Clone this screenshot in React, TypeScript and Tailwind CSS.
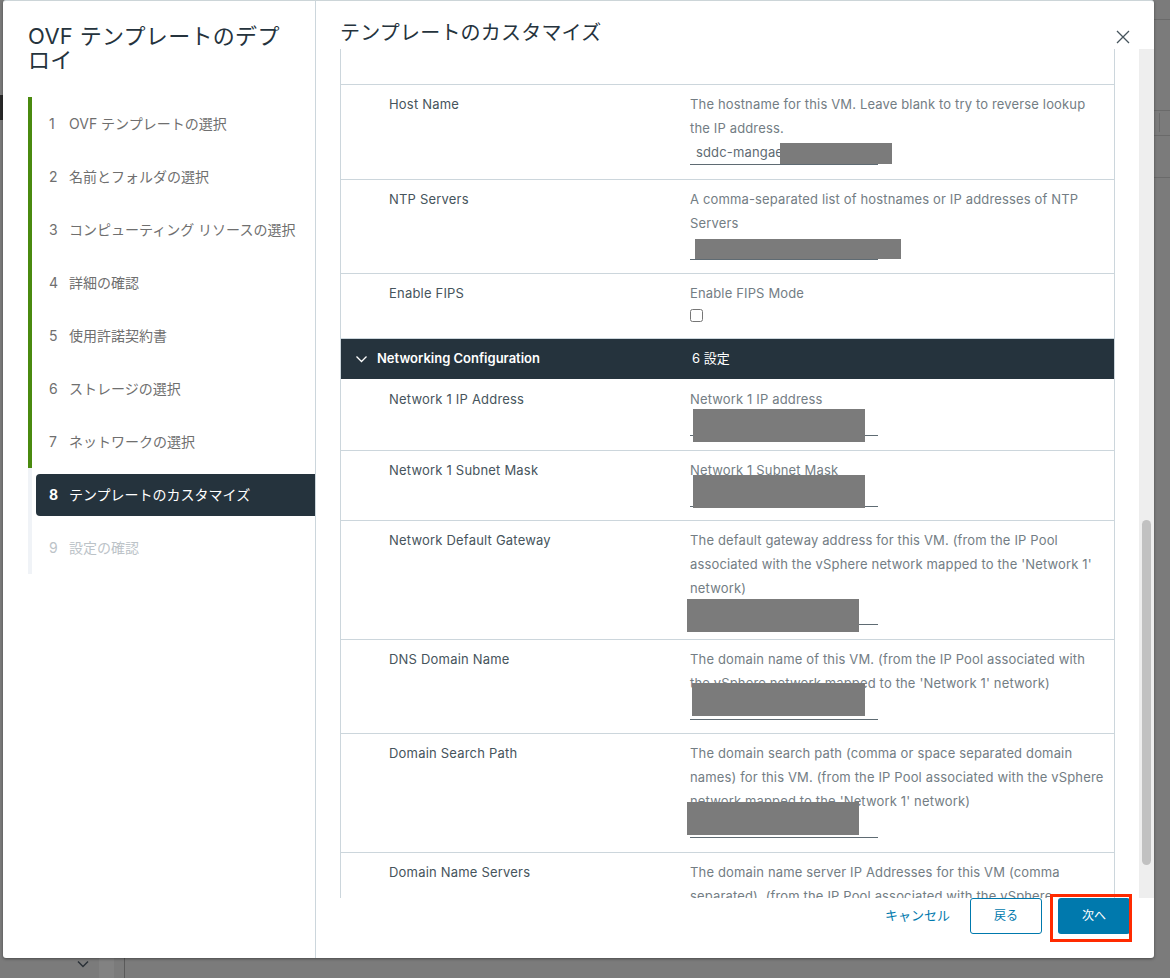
import React from "react";

const steps = [
  "OVF テンプレートの選択",
  "名前とフォルダの選択",
  "コンピューティング リソースの選択",
  "詳細の確認",
  "使用許諾契約書",
  "ストレージの選択",
  "ネットワークの選択",
  "テンプレートのカスタマイズ",
  "設定の確認",
];

type Row = { label: string; lines: string[]; value?: string; mask?: string; tight?: boolean };

const rowsA: Row[] = [
  {
    label: "Host Name",
    lines: ["The hostname for this VM. Leave blank to try to reverse lookup", "the IP address."],
    value: "sddc-mangae",
    mask: "left-[439px] top-[58px] w-[112px] h-[21px]",
  },
  {
    label: "NTP Servers",
    lines: ["A comma-separated list of hostnames or IP addresses of NTP", "Servers"],
    value: "",
    mask: "left-[354px] top-[59px] w-[206px] h-[20px]",
    tight: true,
  },
];

const rowsB: Row[] = [
  {
    label: "Network 1 IP Address",
    lines: ["Network 1 IP address"],
    value: "",
    mask: "left-[352px] top-[29px] w-[172px] h-[33px]",
  },
  {
    label: "Network 1 Subnet Mask",
    lines: ["Network 1 Subnet Mask"],
    value: "",
    mask: "left-[352px] top-[24px] w-[172px] h-[33px]",
    tight: true,
  },
  {
    label: "Network Default Gateway",
    lines: [
      "The default gateway address for this VM. (from the IP Pool",
      "associated with the vSphere network mapped to the 'Network 1'",
      "network)",
    ],
    value: "",
    mask: "left-[346px] top-[78px] w-[172px] h-[33px]",
  },
  {
    label: "DNS Domain Name",
    lines: [
      "The domain name of this VM. (from the IP Pool associated with",
      "the vSphere network mapped to the 'Network 1' network)",
    ],
    value: "",
    mask: "left-[351px] top-[43px] w-[173px] h-[33px]",
    tight: true,
  },
  {
    label: "Domain Search Path",
    lines: [
      "The domain search path (comma or space separated domain",
      "names) for this VM. (from the IP Pool associated with the vSphere",
      "network mapped to the 'Network 1' network)",
    ],
    value: "",
    mask: "left-[346px] top-[68px] w-[172px] h-[33px]",
  },
];

function ConfigRow({ row }: { row: Row }) {
  return (
    <div className={`relative flex border-b border-[#ccd6dc] pt-[7px] ${row.tight ? "pb-[13px]" : "pb-[14px]"}`}>
      <div className="w-[349px] shrink-0 pl-[48px] text-[13px] leading-[24px] tracking-[0.2px] text-[#46545c]">
        {row.label}
      </div>
      <div className="text-[13px] leading-[24px] tracking-[0.15px] text-[#737d84] whitespace-nowrap">
        {row.lines.map((l) => (
          <div key={l}>{l}</div>
        ))}
        <input
          readOnly
          value={row.value ?? ""}
          className="block w-[188px] h-[25px] border-b border-[#5f6b73] pl-[6px] pr-0 text-[13px] tracking-[0.15px] text-[#5f6b73] outline-none"
        />
      </div>
      {row.mask && <div className={`absolute bg-[#7b7b7b] ${row.mask}`} />}
    </div>
  );
}

export default function App() {
  return (
    <div
      className="relative w-[1170px] h-[978px] overflow-hidden bg-[#7b7b7b]"
      style={{ fontFamily: 'Inter, "Noto Sans CJK JP", sans-serif' }}
    >
      {/* dimmed page behind the dialog */}
      <div className="absolute left-0 top-[95px] w-[3px] h-[25px] bg-[#2a2a2a]" />
      <div className="absolute left-[1154px] top-[19px] w-[16px] h-px bg-[#6a6a6a]" />
      <div className="absolute left-[1154px] top-[110px] w-[16px] h-px bg-[#6a6a6a]" />
      <div className="absolute left-[1154px] top-[135px] w-[16px] h-px bg-[#6a6a6a]" />
      <div className="absolute left-[1154px] top-[177px] w-[16px] h-px bg-[#6a6a6a]" />
      <div className="absolute left-[1159px] top-[113px] w-px h-[19px] bg-[#6a6a6a]" />
      <div className="absolute left-[99px] top-[958px] w-[15px] h-[20px] bg-[#828282]" />
      <div className="absolute left-[124px] top-[958px] w-px h-[20px] bg-[#5a5a5a]" />
      <svg className="absolute left-[77px] top-[960px]" width="12" height="8" viewBox="0 0 12 8" fill="none">
        <path d="M1 1.5 6 6.5 11 1.5" stroke="#2b3238" strokeWidth="1.5" />
      </svg>

      {/* dialog */}
      <div className="relative ml-[3px] flex w-[1151px] h-[958px] rounded-[3px] bg-white border-t border-[#ccd5d8] shadow-[0_1px_3px_rgba(0,0,0,0.4)]">
        {/* sidebar */}
        <aside className="w-[313px] shrink-0 border-r border-[#ccd6dc] pl-[25px]">
          <h1 className="pt-[23px] h-[96px] w-[270px] text-[22px] leading-[24px] tracking-[0.3px] font-normal text-[#25333d]">
            OVF テンプレートのデプ
            <br />
            ロイ
          </h1>
          <ol>
            {steps.map((s, i) => {
              const active = i === 7;
              const done = i < 7;
              return (
                <li
                  key={s}
                  className={`flex h-[53px] items-center border-l-4 pl-[4px] text-[14px] ${
                    done ? "border-[#4a8a0f]" : "border-[#f0f3f7]"
                  }`}
                >
                  <div
                    className={`flex h-[42px] flex-1 items-center pl-[13px] whitespace-nowrap ${
                      active
                        ? "rounded-l-[4px] bg-[#25333d] text-white"
                        : i === 8
                          ? "text-[#bcc3c8]"
                          : "text-[#6f6f6f]"
                    }`}
                  >
                    <span className={`w-[20px] ${active ? "font-bold" : ""}`}>{i + 1}</span>
                    <span>{s}</span>
                  </div>
                </li>
              );
            })}
          </ol>
        </aside>

        {/* main */}
        <main className="flex min-w-0 flex-1 flex-col">
          <header className="flex h-[48px] shrink-0 items-start justify-between pl-[24px] pr-[24px]">
            <h2 className="pt-[18px] text-[20px] leading-[28px] tracking-[0.2px] font-normal text-[#25333d]">
              テンプレートのカスタマイズ
            </h2>
            <button className="mt-[29px] mr-0 text-[#46545c]" aria-label="close">
              <svg width="14" height="14" viewBox="0 0 14 14" fill="none">
                <path d="M1 1 13 13M13 1 1 13" stroke="currentColor" strokeWidth="1.3" />
              </svg>
            </button>
          </header>

          <div className="flex h-[849px] shrink-0 overflow-hidden">
            <div className="ml-[24px] w-[775px] shrink-0 self-start border-x border-[#ccd6dc]">
              <div className="h-[36px] border-b border-[#ccd6dc]" />
              {rowsA.map((r) => (
                <ConfigRow key={r.label} row={r} />
              ))}
              <div className="flex h-[65px] border-b border-[#ccd6dc] pt-[7px]">
                <div className="w-[349px] shrink-0 pl-[48px] text-[13px] leading-[24px] tracking-[0.2px] text-[#46545c]">
                  Enable FIPS
                </div>
                <div className="text-[13px] leading-[24px] tracking-[0.15px] text-[#737d84]">
                  <div>Enable FIPS Mode</div>
                  <input type="checkbox" className="mt-[4px] block h-[13px] w-[13px]" />
                </div>
              </div>
              <div className="flex h-[41px] items-center border-b border-white bg-[#25333d] text-[13px] text-white">
                <svg className="ml-[14px] mr-[9px]" width="13" height="8" viewBox="0 0 13 8" fill="none">
                  <path d="M1.5 1.5 6.5 6.5 11.5 1.5" stroke="#ffffff" strokeWidth="1.3" />
                </svg>
                <span className="w-[315px] font-semibold">Networking Configuration</span>
                <span>6 設定</span>
              </div>
              {rowsB.map((r) => (
                <ConfigRow key={r.label} row={r} />
              ))}
              <div className="flex pt-[7px]">
                <div className="w-[349px] shrink-0 pl-[48px] text-[13px] leading-[24px] tracking-[0.2px] text-[#46545c]">
                  Domain Name Servers
                </div>
                <div className="text-[13px] leading-[24px] tracking-[0.15px] text-[#737d84] whitespace-nowrap">
                  <div>The domain name server IP Addresses for this VM (comma</div>
                  <div>separated). (from the IP Pool associated with the vSphere</div>
                </div>
              </div>
            </div>
            <div className="relative ml-auto w-[15px] bg-[#eeeeee]">
              <div className="absolute left-[3px] top-[471px] h-[345px] w-[9px] rounded-[5px] bg-[#c1c1c1]" />
            </div>
          </div>

          <footer className="flex flex-1 items-start justify-end pr-[24px] text-[12px]">
            <button className="mr-[20px] h-[36px] text-[13px] text-[#0079ad]">キャンセル</button>
            <button className="mr-[16px] h-[36px] w-[72px] rounded-[3px] border border-[#0079ad] bg-white text-[#0079ad]">
              戻る
            </button>
            <div className="relative">
              <button className="h-[36px] w-[72px] rounded-[3px] bg-[#0079ad] text-white">次へ</button>
              <div className="absolute left-[-8px] top-[-4px] h-[48px] w-[82px] border-[3px] border-[#ff2a00]" />
            </div>
          </footer>
        </main>
      </div>
    </div>
  );
}
